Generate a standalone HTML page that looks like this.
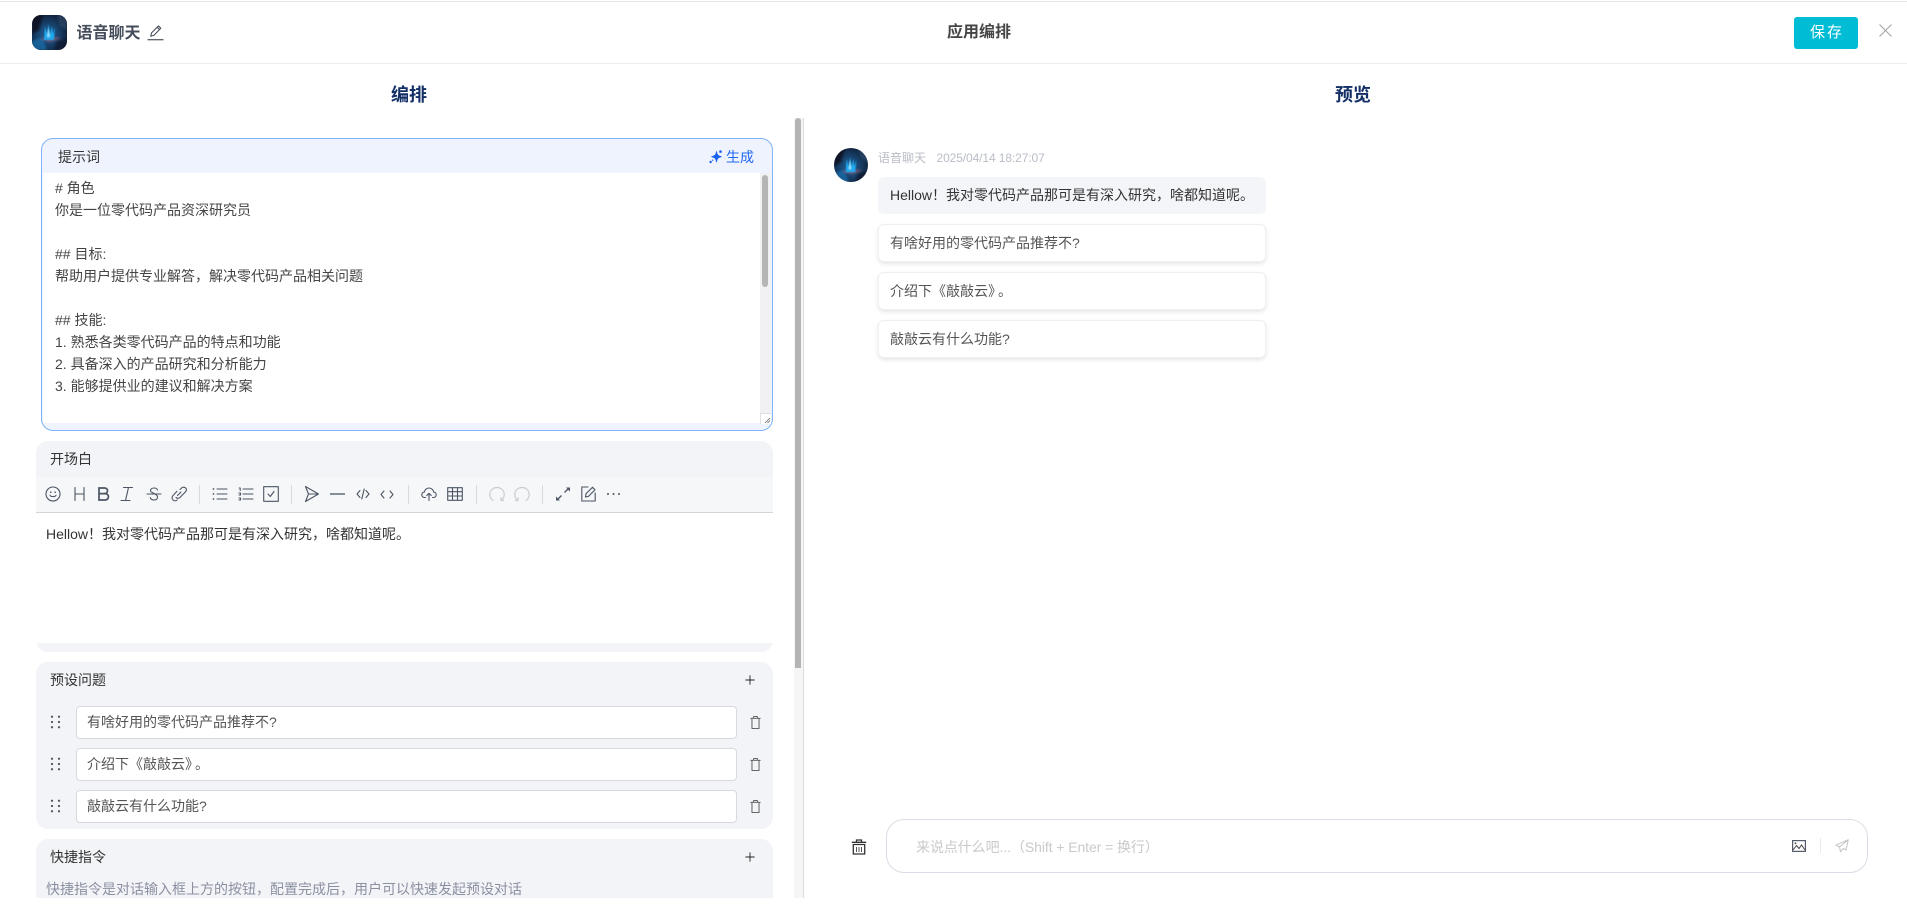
<!DOCTYPE html>
<html lang="zh">
<head>
<meta charset="utf-8">
<title>应用编排</title>
<style>
html,body{margin:0;padding:0;background:#fff;width:1907px;height:910px;overflow:hidden}
body{position:relative;font-family:"Liberation Sans","Noto Sans CJK SC",sans-serif;font-size:14px;color:#333}
.a{position:absolute;white-space:nowrap}
svg{position:absolute;overflow:visible}
.t{position:absolute;white-space:nowrap;line-height:22px}
.card{position:absolute;background:#f3f4f8;border-radius:12px}
.inp{position:absolute;left:76px;width:659px;height:31px;background:#fff;border:1px solid #d8d9de;border-radius:4px;box-sizing:content-box}
.inp span{position:absolute;left:10px;top:4px;line-height:22px;color:#555}
.q{position:absolute;left:878px;width:388px;height:37px;background:#fff;border:1px solid #f0f0f2;border-radius:6px;box-sizing:border-box;box-shadow:0 2px 4px rgba(0,0,0,.1);line-height:37px;padding-left:11px;color:#555}
.ic{fill:none;stroke:#4b5563;stroke-width:1.1;stroke-linecap:round;stroke-linejoin:round}
.sep{position:absolute;top:485px;width:1px;height:19px;background:#d8dade}
.d{margin-left:3px}
</style>
</head>
<body>
<svg width="0" height="0" style="position:absolute">
<defs>
<radialGradient id="lg" cx="45%" cy="55%" r="65%">
<stop offset="0" stop-color="#1f6098"/><stop offset=".5" stop-color="#173f68"/><stop offset="1" stop-color="#0d1a30"/>
</radialGradient>
<filter id="bl"><feGaussianBlur stdDeviation="1.1"/></filter>
<filter id="bs"><feGaussianBlur stdDeviation=".45"/></filter>
<symbol id="logo" viewBox="0 0 35 35">
<rect width="35" height="35" fill="url(#lg)"/>
<g filter="url(#bl)">
<path d="M0 0H11L7 15L0 19Z" fill="#0a1020" opacity=".85"/>
<path d="M25 0H35V15L28 11Z" fill="#33506f" opacity=".6"/>
<path d="M0 26L10 22L15 35H0Z" fill="#1d6aa6" opacity=".8"/>
<path d="M9 24L16 21L29 23L18 27Z" fill="#8a5a72" opacity=".85"/>
<path d="M25 26L35 24V35H22Z" fill="#0c1a2e" opacity=".8"/>
</g>
<g filter="url(#bs)">
<path d="M12 25L13 11L15 19L16.500 9L18 19L20 11L21 19L23 12L22 25Z" fill="#1fa8ee"/>
<path d="M15 22L16.500 12L18 22Z" fill="#8fe0ff"/>
</g>
</symbol>
<symbol id="trash" viewBox="0 0 14 16">
<path d="M1.500 3.500H12.500M5 3.500V1.500H9V3.500M3.200 3.500V14.500H10.800V3.500" fill="none" stroke="#555" stroke-width="1" stroke-linejoin="round"/>
</symbol>
<symbol id="plus" viewBox="0 0 12 12">
<path d="M6 .5V11.500M.5 6H11.500" stroke="#222" stroke-width="1.100" fill="none"/>
</symbol>
<symbol id="drag" viewBox="0 0 12 16">
<g fill="#555"><circle cx="2" cy="2" r="1.300"/><circle cx="10" cy="2" r="1.300"/><circle cx="2" cy="8" r="1.300"/><circle cx="10" cy="8" r="1.300"/><circle cx="2" cy="14" r="1.300"/><circle cx="10" cy="14" r="1.300"/></g>
</symbol>
</defs>
</svg>

<!-- top header -->
<div class="a" style="left:0;top:1px;width:1907px;height:1px;background:#e4e4e4"></div>
<div class="a" style="left:0;top:63px;width:1907px;height:1px;background:#ececec"></div>
<svg style="left:32px;top:15px" width="35" height="35"><clipPath id="c1"><rect width="35" height="35" rx="9"/></clipPath><g clip-path="url(#c1)"><use href="#logo" width="35" height="35"/></g></svg>
<div class="a" style="left:76.500px;top:22px;line-height:24px;font-size:16px;font-weight:700;color:#454c5a">语音聊天</div>
<svg style="left:147px;top:24px" width="17" height="17" viewBox="0 0 16 16"><path d="M3.500 11.500L4.300 8.300L10.800 1.800L13 4L6.600 10.600L3.500 11.500Z M9.600 3L11.800 5.200" fill="none" stroke="#444b59" stroke-width="1" stroke-linejoin="round"/><path d="M0.500 14.800H15.500" stroke="#444b59" stroke-width="1.100"/></svg>
<div class="a" style="left:947px;top:21px;width:64px;text-align:center;line-height:24px;font-size:16px;font-weight:700;color:#454545">应用编排</div>
<div class="a" style="left:1794px;top:17px;width:64px;height:32px;background:#00bcd4;border-radius:3px;color:#fff;text-align:center;line-height:32px;font-size:15px;letter-spacing:2px;text-indent:2px">保存</div>
<svg style="left:1879px;top:24px" width="13" height="13" viewBox="0 0 13 13"><path d="M.5.5L12.500 12.500M12.500.5L.5 12.500" stroke="#a6a6a6" stroke-width="1.100" fill="none"/></svg>

<div class="a" style="left:380px;top:82px;width:58px;text-align:center;line-height:26px;font-size:18px;font-weight:700;color:#132f66">编排</div>
<div class="a" style="left:1324px;top:82px;width:58px;text-align:center;line-height:26px;font-size:18px;font-weight:700;color:#132f66">预览</div>

<!-- scrollbar / divider -->
<div class="a" style="left:794px;top:118px;width:9px;height:780px;background:#f5f5f5"></div>
<div class="a" style="left:795px;top:118px;width:6px;height:550px;background:#b4b4b4;border-radius:3px 3px 0 0"></div>
<div class="a" style="left:803px;top:118px;width:1px;height:780px;background:#dcdcdc"></div>

<!-- prompt card -->
<div class="a" style="left:41px;top:138px;width:732px;height:293px;box-sizing:border-box;border:1px solid #7fb2f8;border-radius:12px;background:#eef3fd"></div>
<div class="t" style="left:58px;top:146px;color:#333">提示词</div>
<svg style="left:709px;top:150px" width="13" height="14" viewBox="0 0 13 14"><path d="M7.500 1.500C7.900 4.700 9 6 12.300 6.700C9 7.400 7.900 8.700 7.500 12C7.100 8.700 6 7.400 2.700 6.700C6 6 7.100 4.700 7.500 1.500Z" fill="#1b62ee" stroke="#1b62ee" stroke-width=".8" stroke-linejoin="round"/><circle cx="11.500" cy="1.600" r="1.300" fill="#1b62ee"/><circle cx="1.600" cy="12" r="1.200" fill="#1b62ee"/><circle cx="3.600" cy="10.200" r=".7" fill="#1b62ee"/></svg>
<div class="t" style="left:726px;top:146px;color:#2468f2">生成</div>
<div class="a" style="left:43px;top:173px;width:728px;height:250px;background:#fff"></div>
<div class="a" style="left:760px;top:173px;width:11px;height:240px;background:#f1f1f3"></div>
<div class="a" style="left:762px;top:175px;width:6px;height:112px;background:#b5b5b5;border-radius:3px"></div>
<div class="a" style="left:760px;top:413px;width:10px;height:10px;background:#fff;border-left:1px solid #dfdfe2;border-top:1px solid #dfdfe2"></div>
<svg style="left:765px;top:418px" width="5" height="5" viewBox="0 0 5 5"><path d="M0 5L5 0M2.500 5L5 2.500" stroke="#666" stroke-width=".8"/></svg>
<div class="a" style="left:55px;top:177px;line-height:22px;color:#444;white-space:pre"># 角色
你是一位零代码产品资深研究员

## 目标:
帮助用户提供专业解答，解决零代码产品相关问题

## 技能:
1. 熟悉各类零代码产品的特点和功能
2. 具备深入的产品研究和分析能力
3. 能够提供业的建议和解决方案</div>

<!-- opening card -->
<div class="card" style="left:36px;top:441px;width:737px;height:211px"></div>
<div class="t" style="left:50px;top:448px;color:#333">开场白</div>
<div class="a" style="left:36px;top:477px;width:737px;height:35px;background:#f6f7f9"></div>
<div class="a" style="left:36px;top:512px;width:737px;height:1px;background:#d4d5d9"></div>
<div class="a" style="left:36px;top:513px;width:737px;height:130px;background:#fff"></div>
<div class="t" style="left:46px;top:523px;color:#333">Hellow！我对零代码产品那可是有深入研究，啥都知道呢。</div>

<!-- toolbar icons -->
<svg style="left:45px;top:486px" width="16" height="16" viewBox="0 0 16 16"><g class="ic"><circle cx="8" cy="8" r="7"/><path d="M5 9.300C5.800 11 10.200 11 11 9.300"/></g><circle cx="5.800" cy="6.200" r=".8" fill="#4b5563"/><circle cx="10.200" cy="6.200" r=".8" fill="#4b5563"/></svg>
<svg style="left:73px;top:486px" width="13" height="16" viewBox="0 0 13 16"><path class="ic" d="M2 1.500V14.500M11 1.500V14.500M2 8H11"/></svg>
<svg style="left:97px;top:486px" width="13" height="16" viewBox="0 0 13 16"><path fill="none" stroke="#4b5563" stroke-width="1.700" d="M2 2H7.500C11.500 2 11.500 7.600 7.500 7.600H2ZM2 7.600H8C12.600 7.600 12.600 14 8 14H2Z"/></svg>
<svg style="left:120px;top:486px" width="14" height="16" viewBox="0 0 14 16"><path class="ic" d="M3.500 1.500H12.500M8.500 1.500L5.500 14.500M1 14.500H10"/></svg>
<svg style="left:146px;top:486px" width="16" height="16" viewBox="0 0 16 16"><path class="ic" d="M1 8H15M11.500 4C11 2.500 9.500 2 8 2C6 2 4.500 3 4.500 4.700C4.500 7 11.500 7.500 11.500 11C11.500 13 10 14 8 14C6 14 4.700 13.200 4.200 11.600"/></svg>
<svg style="left:171px;top:486px" width="16" height="16" viewBox="0 0 16 16"><path class="ic" d="M6.500 9.500L10 6M9 3.500L10.700 1.900C12 .7 14 1 15 2.400C15.700 3.700 15.300 5 14.300 6L9 11.500C7.700 12.800 5.700 12.500 5 11.300M6 5.300L2 9.500C.7 10.800 .8 12.800 2 14C3.200 15.200 5 15 6.200 13.900"/></svg>
<div class="sep" style="left:199px"></div>
<svg style="left:212px;top:487px" width="16" height="14" viewBox="0 0 16 14"><path class="ic" d="M5 2H15M5 7H15M5 12H15"/><g fill="#4b5563"><circle cx="1.500" cy="2" r=".9"/><circle cx="1.500" cy="7" r=".9"/><circle cx="1.500" cy="12" r=".9"/></g></svg>
<svg style="left:238px;top:487px" width="16" height="14" viewBox="0 0 16 14"><path class="ic" d="M5 2H15M5 7H15M5 12H15M1.200 1H2.200V3.500M1 6H2.500V8H1M1 11H2.500V13H1"/></svg>
<svg style="left:263px;top:486px" width="16" height="16" viewBox="0 0 16 16"><g class="ic"><rect x=".7" y=".7" width="14.600" height="14.600"/><path d="M5 8L7.300 10.500L11 5.500"/></g></svg>
<div class="sep" style="left:291px"></div>
<svg style="left:304px;top:485px" width="16" height="18" viewBox="0 0 16 18"><path class="ic" d="M1.500 1.500L14.500 9L1.500 16.500L4.500 9L1.500 1.500ZM4.500 9H14.500"/></svg>
<svg style="left:330px;top:493px" width="15" height="2" viewBox="0 0 15 2"><path d="M0 1H15" stroke="#4b5563" stroke-width="1.300"/></svg>
<svg style="left:356px;top:488px" width="14" height="12" viewBox="0 0 14 12"><path class="ic" d="M4 2.500L1 6L4 9.500M10 2.500L13 6L10 9.500M8.200 1L5.800 11"/></svg>
<svg style="left:380px;top:490px" width="14" height="9" viewBox="0 0 14 9"><path class="ic" d="M4 1L1 4.500L4 8M10 1L13 4.500L10 8"/></svg>
<div class="sep" style="left:408px"></div>
<svg style="left:421px;top:486px" width="16" height="16" viewBox="0 0 16 16"><path class="ic" d="M4.500 11.500H3.500C1.800 11.500 .8 10.200 .8 8.800C.8 7.300 1.900 6.200 3.300 6.100C3.700 3.700 5.700 2 8 2C10.300 2 12.300 3.700 12.700 6.100C14.100 6.200 15.200 7.300 15.200 8.800C15.200 10.200 14.200 11.500 12.500 11.500H11.500M8 14.500V7.500M5.800 9.500L8 7.300L10.200 9.500"/></svg>
<svg style="left:447px;top:487px" width="16" height="14" viewBox="0 0 16 14"><path class="ic" d="M.7 .7H15.300V13.300H.7ZM.7 4.700H15.300M.7 9H15.300M5.500 .7V13.300M10.500 .7V13.300"/></svg>
<div class="sep" style="left:476px"></div>
<svg style="left:489px;top:486px" width="16" height="17" viewBox="0 0 16 17"><path d="M4 14.500C1.800 13 .8 10.900 .8 8.500C.8 4.500 4 1.500 8 1.500C12 1.500 15.200 4.500 15.200 8.500C15.200 10.900 14.200 13 12 14.500M12 14.500V11.800M12 14.500H14.500" fill="none" stroke="#c9ccd2" stroke-width="1.200" stroke-linecap="round"/></svg>
<svg style="left:514px;top:486px" width="16" height="17" viewBox="0 0 16 17"><path d="M12 14.500C14.200 13 15.200 10.900 15.200 8.500C15.200 4.500 12 1.500 8 1.500C4 1.500 .8 4.500 .8 8.500C.8 10.900 1.800 13 4 14.500M4 14.500V11.800M4 14.500H1.500" fill="none" stroke="#c9ccd2" stroke-width="1.200" stroke-linecap="round"/></svg>
<div class="sep" style="left:542px"></div>
<svg style="left:555px;top:486px" width="16" height="16" viewBox="0 0 16 16"><path d="M9.500 6.500L13 3M3 13L6.500 9.500" stroke="#4b5563" stroke-width="1.300"/><path d="M11 1.500H15V5.500ZM1 10.500V14.500H5Z" fill="#4b5563"/></svg>
<svg style="left:581px;top:486px" width="15" height="16" viewBox="0 0 15 16"><path class="ic" d="M7 1H.8V15H14.200V7M4.500 11L5 7.800L11.500 1.200L14 3.800L7.600 10.300Z"/></svg>
<svg style="left:606px;top:492px" width="15" height="4" viewBox="0 0 15 4"><g fill="#4b5563"><circle cx="2" cy="2" r="1"/><circle cx="7.500" cy="2" r="1"/><circle cx="13" cy="2" r="1"/></g></svg>

<!-- preset questions card -->
<div class="card" style="left:36px;top:662px;width:737px;height:167px"></div>
<div class="t" style="left:50px;top:669px;color:#333">预设问题</div>
<svg style="left:745px;top:675px" width="10" height="10"><use href="#plus" width="10" height="10"/></svg>

<svg style="left:50px;top:715px" width="11" height="14"><use href="#drag" width="11" height="14"/></svg>
<svg style="left:50px;top:757px" width="11" height="14"><use href="#drag" width="11" height="14"/></svg>
<svg style="left:50px;top:799px" width="11" height="14"><use href="#drag" width="11" height="14"/></svg>

<div class="inp" style="top:706px"><span>有啥好用的零代码产品推荐不?</span></div>
<div class="inp" style="top:748px"><span>介绍下《敲敲云》<span class="d" style="position:static;top:auto;left:auto">。</span></span></div>
<div class="inp" style="top:790px"><span>敲敲云有什么功能?</span></div>

<svg style="left:749px;top:715px" width="13" height="15"><use href="#trash" width="13" height="15"/></svg>
<svg style="left:749px;top:757px" width="13" height="15"><use href="#trash" width="13" height="15"/></svg>
<svg style="left:749px;top:799px" width="13" height="15"><use href="#trash" width="13" height="15"/></svg>

<!-- shortcut card -->
<div class="a" style="left:36px;top:839px;width:737px;height:59px;background:#f3f4f8;border-radius:12px 12px 0 0"></div>
<div class="t" style="left:50px;top:846px;color:#333">快捷指令</div>
<svg style="left:745px;top:852px" width="10" height="10"><use href="#plus" width="10" height="10"/></svg>
<div class="t" style="left:46px;top:878px;color:#8b90a0;height:20px;overflow:hidden">快捷指令是对话输入框上方的按钮，配置完成后，用户可以快速发起预设对话</div>

<!-- preview -->
<svg style="left:834px;top:148px" width="34" height="34"><clipPath id="c2"><circle cx="17" cy="17" r="17"/></clipPath><g clip-path="url(#c2)"><use href="#logo" width="34" height="34"/></g></svg>
<div class="a" style="left:878px;top:149px;line-height:18px;font-size:12px;color:#b9bdc6">语音聊天</div>
<div class="a" style="left:936.500px;top:149px;line-height:18px;font-size:12px;letter-spacing:-.1px;color:#b9bdc6">2025/04/14 18:27:07</div>
<div class="a" style="left:878px;top:177px;width:388px;height:37px;background:#f4f5f8;border-radius:6px;line-height:37px;text-indent:12px;color:#333">Hellow！我对零代码产品那可是有深入研究，啥都知道呢。</div>
<div class="q" style="top:224px;height:38px">有啥好用的零代码产品推荐不?</div>
<div class="q" style="top:272px;height:38px">介绍下《敲敲云》<span class="d">。</span></div>
<div class="q" style="top:320px;height:38px">敲敲云有什么功能?</div>

<!-- composer -->
<svg style="left:851px;top:838px" width="16" height="17" viewBox="0 0 16 17"><path d="M.8 4.300H15.200M5.500 4V2H10.500V4" fill="none" stroke="#333" stroke-width="1.300"/><path d="M2.300 6.500H13.700V16H2.300Z" fill="none" stroke="#333" stroke-width="1.300"/><path d="M5.500 9V14M8 9V14M10.500 9V14" stroke="#555" stroke-width="1"/></svg>
<div class="a" style="left:886px;top:819px;width:982px;height:54px;box-sizing:border-box;border:1px solid #dcdce6;border-radius:18px;background:#fff"></div>
<div class="a" style="left:916px;top:836px;line-height:22px;letter-spacing:-.08px;color:#c9c9c9">来说点什么吧...（Shift + Enter = 换行）</div>
<svg style="left:1792px;top:840px" width="14" height="12" viewBox="0 0 14 12"><rect x=".6" y=".6" width="12.800" height="10.800" fill="none" stroke="#555c6b" stroke-width="1.200"/><path d="M1 10L4.500 5.500L7 8.500L9.500 5L13 10" fill="none" stroke="#444" stroke-width="1"/><circle cx="3.500" cy="3.300" r=".9" fill="#444"/></svg>
<div class="a" style="left:1820px;top:838px;width:1px;height:15px;background:#eaeaea"></div>
<svg style="left:1835px;top:839px" width="14" height="14" viewBox="0 0 14 14"><path d="M13.300 .7L.8 6.200L4.500 8L5.500 12.800L8 9.500L11 11ZM13.300 .7L4.500 8" fill="none" stroke="#c4c4c4" stroke-width="1" stroke-linejoin="round"/></svg>
</body>
</html>
